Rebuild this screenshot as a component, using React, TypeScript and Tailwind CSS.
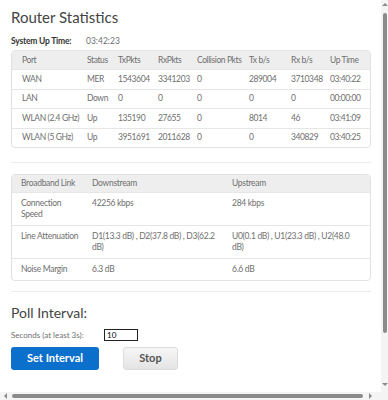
import React from 'react';

const ports = [
  ['WAN', 'MER', '1543604', '3341203', '0', '289004', '3710348', '03:40:22'],
  ['LAN', 'Down', '0', '0', '0', '0', '0', '00:00:00'],
  ['WLAN (2.4 GHz)', 'Up', '135190', '27655', '0', '8014', '46', '03:41:09'],
  ['WLAN (5 GHz)', 'Up', '3951691', '2011628', '0', '0', '340829', '03:40:25'],
];

const portHead = ['Port', 'Status', 'TxPkts', 'RxPkts', 'Collision Pkts', 'Tx b/s', 'Rx b/s', 'Up Time'];

const link = [
  ['Connection Speed', '42256 kbps', '284 kbps'],
  ['Line Attenuation', 'D1(13.3 dB) , D2(37.8 dB) , D3(62.2 dB)', 'U0(0.1 dB) , U1(23.3 dB) , U2(48.0 dB)'],
  ['Noise Margin', '6.3 dB', '6.6 dB'],
];

const portCols = 'grid grid-cols-[75px_31px_40px_39px_52px_42px_39px_1fr]';
const linkCols = 'grid grid-cols-[80px_140px_1fr]';

export default function App() {
  return (
    <div className="relative h-[400px] w-[388px] overflow-hidden bg-white font-['Lato',sans-serif] text-[#6f6f6f]">
      <div className="w-[382px] px-[11px] pt-[7px]">
        <h1 className="text-[15px] leading-[20px] text-[#444]">Router Statistics</h1>

        <div className="mt-[8px] flex text-[8.5px] leading-[12px]">
          <span className="w-[75px] font-bold text-[#333] tracking-[-0.2px]">System Up Time:</span>
          <span>03:42:23</span>
        </div>

        {/* port table */}
        <div className="mt-[3px] overflow-hidden rounded-[4px] border border-[#e2e2e2] text-[8.5px] tracking-[-0.4px] whitespace-nowrap">
          <div className={`${portCols} h-[18px] items-center bg-[#eeeeee]`}>
            {portHead.map((h, i) => (
              <div key={h} className={i === 0 ? 'pl-[10px]' : ''}>{h}</div>
            ))}
          </div>
          {ports.map((r) => (
            <div key={r[0]} className={`${portCols} h-[19.5px] items-center border-t border-[#e6e6e6]`}>
              {r.map((c, i) => (
                <div key={i} className={i === 0 ? 'pl-[10px]' : ''}>{c}</div>
              ))}
            </div>
          ))}
        </div>

        <div className="mt-[14px] h-px bg-[#ececec]" />

        {/* broadband table */}
        <div className="mt-[11px] overflow-hidden rounded-[4px] border border-[#e2e2e2] text-[8.5px] leading-[11px] tracking-[-0.3px]">
          <div className={`${linkCols} h-[17px] items-center bg-[#eeeeee]`}>
            <div className="pl-[9px]">Broadband Link</div>
            <div>Downstream</div>
            <div>Upstream</div>
          </div>
          {link.map((r) => (
            <div key={r[0]} className={`${linkCols} border-t border-[#e6e6e6] py-[5px]`}>
              <div className="pl-[9px] pr-[11px]">{r[0]}</div>
              <div className="pr-[10px]">{r[1]}</div>
              <div className="pr-[14px]">{r[2]}</div>
            </div>
          ))}
        </div>

        <div className="mt-[10px] h-px bg-[#ececec]" />

        <h2 className="mt-[12px] text-[14px] leading-[18px] text-[#444]">Poll Interval:</h2>

        <div className="mt-[7px] flex items-center text-[8px]">
          <span className="w-[93px]">Seconds (at least 3s):</span>
          <input
            defaultValue="10"
            className="h-[12px] w-[34px] border border-[#222] px-[2px] text-[8px] leading-[10px] text-[#000] outline-none"
          />
        </div>

        <div className="mt-[6px] flex gap-[24px]">
          <button className="h-[23px] w-[88px] rounded-[3px] bg-[#0b6fcc] text-[11px] font-bold text-white">
            Set Interval
          </button>
          <button className="h-[23px] w-[55px] rounded-[3px] border border-[#dcdcdc] bg-gradient-to-b from-[#f6f6f6] to-[#e4e4e4] text-[11px] font-bold text-[#555]">
            Stop
          </button>
        </div>
      </div>

      {/* vertical scrollbar */}
      <div className="absolute right-0 top-0 h-[392px] w-[7px] bg-[#f4f4f4]">
        <div className="mx-auto mt-[3px] h-0 w-0 border-x-[3px] border-b-[3px] border-x-transparent border-b-[#8a8a8a]" />
        <div className="mx-auto mt-[7px] h-[320px] w-[4px] rounded-[2px] bg-[#8b8b8b]" />
        <div className="absolute bottom-[6px] left-[0.5px] h-0 w-0 border-x-[3px] border-t-[3px] border-x-transparent border-t-[#8a8a8a]" />
      </div>

      {/* horizontal scrollbar */}
      <div className="absolute bottom-0 left-0 flex h-[8px] w-[388px] items-center bg-[#f4f4f4]">
        <div className="ml-[4px] h-0 w-0 border-y-[3px] border-r-[3px] border-y-transparent border-r-[#8a8a8a]" />
        <div className="ml-[5px] h-[4px] w-[351px] rounded-[2px] bg-[#8b8b8b]" />
        <div className="ml-[6px] h-0 w-0 border-y-[3px] border-l-[3px] border-y-transparent border-l-[#8a8a8a]" />
      </div>
    </div>
  );
}
